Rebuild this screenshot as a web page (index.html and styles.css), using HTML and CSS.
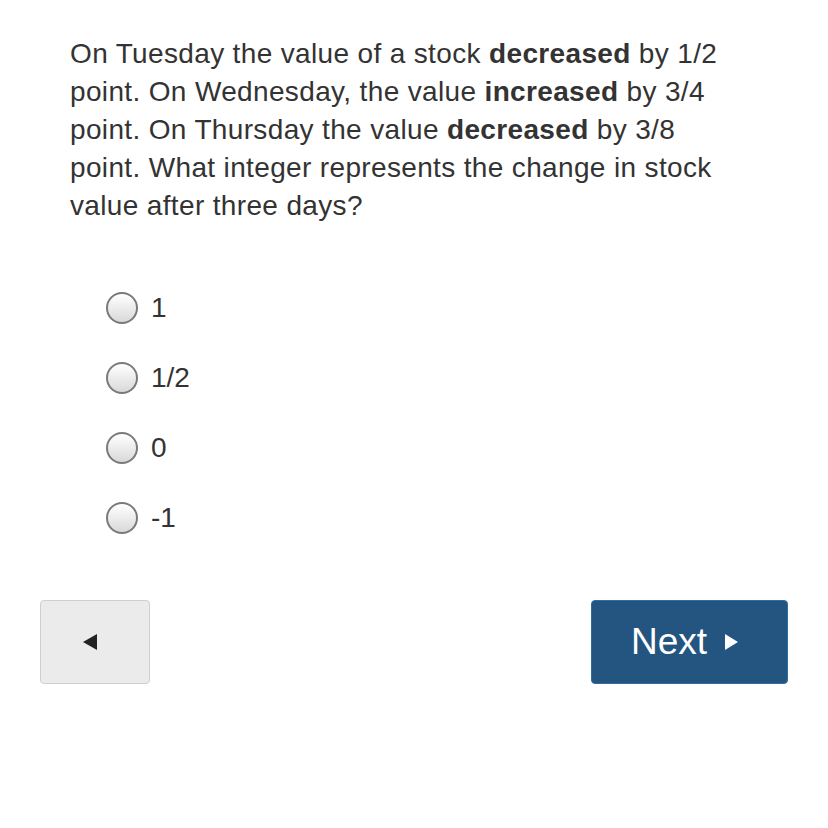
FILE: index.html
```html
<!DOCTYPE html>
<html>
<head>
<meta charset="utf-8">
<link rel="stylesheet" href="styles.css">
</head>
<body>
<div class="page">
  <p class="question">On Tuesday the value of a stock <b>decreased</b> by 1/2 point. On Wednesday, the value <b>increased</b> by 3/4 point. On Thursday the value <b>decreased</b> by 3/8 point. What integer represents the change in stock value after three days?</p>
  <ul class="options">
    <li class="option"><span class="radio"></span><span class="label">1</span></li>
    <li class="option"><span class="radio"></span><span class="label">1/2</span></li>
    <li class="option"><span class="radio"></span><span class="label">0</span></li>
    <li class="option"><span class="radio"></span><span class="label">-1</span></li>
  </ul>
  <div class="nav">
    <button class="btn btn-back"><span class="tri-left"></span></button>
    <button class="btn btn-next">Next<span class="tri-right"></span></button>
  </div>
</div>
</body>
</html>
```
FILE: styles.css
```css
html, body {
  margin: 0;
  padding: 0;
  background: #fff;
}
.page {
  font-family: "Liberation Sans", Arial, sans-serif;
  color: #333;
  padding-top: 35px;
}
.question {
  margin: 0 0 0 70px;
  width: 662px;
  font-size: 28px;
  letter-spacing: 0.35px;
  line-height: 38px;
}
.question b {
  font-weight: bold;
}
.options {
  list-style: none;
  margin: 48px 0 0 0;
  padding: 0 0 0 106px;
}
.option {
  height: 70px;
  display: flex;
  align-items: center;
  gap: 13px;
}
.radio {
  width: 28px;
  height: 28px;
  border-radius: 50%;
  border: 2px solid #7a7a7a;
  background: linear-gradient(#ffffff, #d9d9d9);
  box-sizing: content-box;
  flex: none;
}
.label {
  font-size: 28px;
  line-height: 30px;
}
.nav {
  margin-top: 47px;
  padding: 0 40px;
  display: flex;
  justify-content: space-between;
}
.btn {
  height: 84px;
  border-radius: 4px;
  display: flex;
  align-items: center;
  justify-content: center;
  font-family: "Liberation Sans", Arial, sans-serif;
  padding: 0;
  box-sizing: border-box;
}
.btn-back {
  width: 110px;
  background: #ebebeb;
  border: 1px solid #cfcfcf;
}
.tri-left {
  width: 0;
  height: 0;
  border-top: 8px solid transparent;
  border-bottom: 8px solid transparent;
  border-right: 14px solid #222;
  margin-left: -10px;
}
.btn-next {
  width: 197px;
  background: #245580;
  border: 1px solid #2e6da4;
  color: #fff;
  font-size: 37px;
  gap: 18px;
  padding-right: 10px;
}
.tri-right {
  width: 0;
  height: 0;
  border-top: 8px solid transparent;
  border-bottom: 8px solid transparent;
  border-left: 13px solid #fff;
}
```
